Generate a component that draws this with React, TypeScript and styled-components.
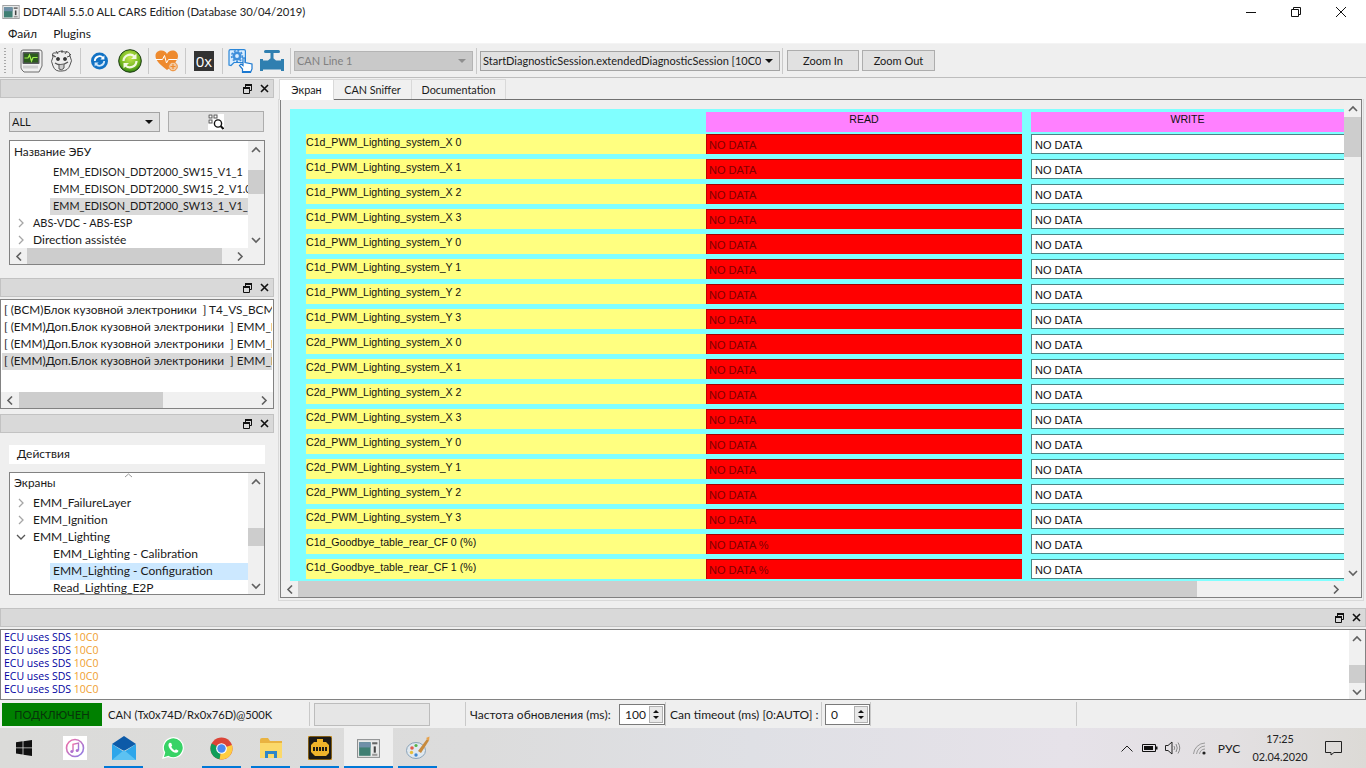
import React from "react";
import styled, { createGlobalStyle } from "styled-components";

const Global = createGlobalStyle`
  html, body { margin: 0; padding: 0; background: #efefef; }
  * { box-sizing: border-box; }
`;

const Page = styled.div`
  width: 1366px; height: 768px; overflow: hidden; display: flex; flex-direction: column;
  font-family: Lato, "Open Sans", sans-serif; font-size: 12px; color: #1a1a1a; background: #efefef;
`;
const TitleBar = styled.div`
  height: 24px; background: #fff; display: flex; align-items: center; padding-left: 2px; font-size: 11.3px; color: #222; flex: none;
`;
const TitleText = styled.span` margin-left: 3px; margin-bottom: 1px; `;
const WinButtons = styled.div` margin-left: auto; display: flex; align-items: center; height: 100%; padding-right: 20px; gap: 35px; `;
const MenuBar = styled.div`
  height: 20px; background: #fff; display: flex; align-items: center; padding-left: 8px; gap: 16px; flex: none; border-bottom: 1px solid #f4f4f4;
`;
const Toolbar = styled.div`
  height: 34px; flex: none; background: #efefef; border-bottom: 1px solid #bdbdbd; display: flex; align-items: center;
`;
const Grip = styled.div`
  width: 12px; height: 26px; display: flex; flex-direction: column; justify-content: space-between; align-items: flex-start; padding-left: 4px;
  &::before { content: ""; width: 2px; height: 100%; background: repeating-linear-gradient(#a8a8a8 0 1px, transparent 1px 3px); }
`;
const Sep = styled.div<{ $h?: number }>`
  width: 1px; height: ${p => p.$h ?? 26}px; background: #c9c9c9; flex: none;
`;
const Group = styled.div<{ $w: number; $pl: number; $gap?: number }>`
  width: ${p => p.$w}px; padding-left: ${p => p.$pl}px; display: flex; align-items: center; gap: ${p => p.$gap ?? 0}px; flex: none;
`;
const ZeroX = styled.div`
  width: 20px; height: 20px; background: #333; color: #fff; font-size: 15px; line-height: 20px; display: flex; align-items: flex-end; justify-content: center;
  font-family: "Open Sans", sans-serif; padding-top: 4px;
`;
const Combo = styled.div<{ $w: number; $off?: boolean }>`
  width: ${p => p.$w}px; height: 20px; display: flex; align-items: center; padding: 0 6px 0 2px; flex: none; overflow: hidden; white-space: nowrap; font-size: 11px;
  background: ${p => (p.$off ? "#c9c9c9" : "#e1e1e1")}; border: 1px solid ${p => (p.$off ? "#b4b4b4" : "#a3a3a3")};
  color: ${p => (p.$off ? "#808080" : "#1a1a1a")};
`;
const ComboText = styled.span` flex: 1; overflow: hidden; `;
const Arrow = styled.span<{ $off?: boolean }>`
  width: 0; height: 0; margin-left: 4px; flex: none;
  border-left: 4px solid transparent; border-right: 4px solid transparent; border-top: 4px solid ${p => (p.$off ? "#8f8f8f" : "#111")};
`;
const PushButton = styled.button<{ $w: number }>`
  width: ${p => p.$w}px; height: 21px; padding: 0; background: #e1e1e1; border: 1px solid #adadad; font: inherit; font-size: 11px; color: #1a1a1a; display: flex; align-items: center; justify-content: center; flex: none;
`;
const Main = styled.div` flex: none; height: 530px; display: flex; `;
const Left = styled.div` width: 274px; flex: none; padding-top: 1px; display: flex; flex-direction: column; `;
const DockHead = styled.div`
  height: 19px; flex: none; background: #d9d9d9; border: 1px solid #c2c2c2; display: flex; align-items: center; justify-content: flex-end; padding-right: 4px; gap: 8px;
`;
const DockBody = styled.div<{ $h: number }>` height: ${p => p.$h}px; flex: none; `;
const EcuBody = styled(DockBody)` padding: 13px 9px 0; display: flex; flex-direction: column; gap: 8px; `;
const ComboRow = styled.div` display: flex; gap: 8px; height: 21px; align-items: center; `;
const TreeFrame = styled.div<{ $h: number; $hb?: boolean }>`
  height: ${p => p.$h}px; width: 256px; flex: none; border: 1px solid #828282; background: #fff; display: grid;
  grid-template-columns: 1fr 16px; grid-template-rows: ${p => (p.$hb ? "1fr 16px" : "1fr")};
  overflow: hidden;
`;
const TreeView = styled.div` overflow: hidden; min-width: 0; min-height: 0; white-space: nowrap; `;
const TreeHeader = styled.div<{ $h: number }>` height: ${p => p.$h}px; padding: 0 0 3px 4px; display: flex; align-items: center; position: relative; font-size: 11.8px; `;
const SortMark = styled.svg` position: absolute; left: 114px; top: 0; `;
const TreeRow = styled.div<{ $lvl: number; $sel?: "gray" | "blue"; $caps?: boolean }>`
  height: 17px; line-height: 15px; padding-bottom: 2px; margin-left: ${p => (p.$lvl === 2 ? 40 : 0)}px; padding-left: ${p => (p.$lvl === 2 ? 3 : 6)}px; display: flex; align-items: center; overflow: hidden;
  font-size: ${p => (p.$caps ? "10.9px" : "12px")};
  background: ${p => (p.$sel === "gray" ? "#d9d9d9" : p.$sel === "blue" ? "#cce8ff" : "transparent")};
`;
const Twist = styled.span` width: 17px; flex: none; display: flex; align-items: center; justify-content: flex-start; `;
const Corner = styled.div` background: #f0f0f0; `;
const VTrack = styled.div` background: #f0f0f0; display: flex; flex-direction: column; min-height: 0; overflow: hidden; height: 100%; `;
const HTrack = styled.div` background: #f0f0f0; display: flex; align-items: stretch; min-width: 0; overflow: hidden; height: 16px; `;
const ArrowBox = styled.div<{ $s?: number; $end?: boolean }>`
  flex: none; display: flex; align-items: center; justify-content: center; width: ${p => p.$s ?? 17}px;
`;
const VArrowBox = styled.div<{ $s?: number }>`
  flex: none; display: flex; align-items: center; justify-content: center; height: ${p => p.$s ?? 17}px;
`;
const VThumb = styled.div<{ $top: number; $len: number }>`
  flex: none; margin-top: ${p => p.$top}px; height: ${p => p.$len}px; background: #cdcdcd;
`;
const HThumb = styled.div<{ $left: number; $len: number }>`
  flex: none; margin-left: ${p => p.$left}px; width: ${p => p.$len}px; background: #cdcdcd;
`;
const Spacer = styled.div` flex: 1; `;
const ListFrame = styled.div`
  height: 110px; flex: none; margin-top: 2px; border: 1px solid #828282; background: #fff; display: flex; flex-direction: column; overflow: hidden;
`;
const ListRows = styled.div` flex: 1; padding: 2px 1px 0; overflow: hidden; white-space: nowrap; font-size: 11.8px; `;
const ListRow = styled.div<{ $sel?: boolean }>`
  height: 17px; line-height: 15px; padding-left: 2px; overflow: hidden; background: ${p => (p.$sel ? "#d9d9d9" : "transparent")};
`;
const ActionBody = styled(DockBody)` padding: 12px 9px 0; display: flex; flex-direction: column; gap: 8px; `;
const ActionTab = styled.div` height: 19px; width: 256px; background: #fff; display: flex; align-items: center; padding: 0 0 2px 8px; flex: none; `;
const Right = styled.div` flex: 1; padding: 1px 2px 0 4px; min-width: 0; display: flex; flex-direction: column; `;
const TabBar = styled.div` height: 21px; display: flex; flex: none; padding-left: 1px; `;
const Tab = styled.div<{ $w: number; $on?: boolean }>`
  width: ${p => p.$w}px; height: ${p => (p.$on ? 21 : 20)}px; display: flex; align-items: center; justify-content: center; font-size: 10.8px; padding-bottom: 1px;
  background: ${p => (p.$on ? "#fff" : "#f0f0f0")}; border: 1px solid #d9d9d9; border-bottom: none; border-left-width: ${p => (p.$on ? 1 : 0)}px; z-index: ${p => (p.$on ? 1 : 0)}; position: relative;
`;
const TabPane = styled.div`
  height: 502px; flex: none; margin-top: -1px; border: 1px solid #d9d9d9; border-top: none; padding: 0 1px 2px 1px;
`;
const Frame = styled.div`
  height: 100%; border: 1px solid #808080; border-top-color: #707070; display: grid; grid-template-columns: 1fr 17px; grid-template-rows: 481px 16px; background: #efefef; overflow: hidden;
`;
const Viewport = styled.div` overflow: hidden; padding: 9px 0 0 9px; min-width: 0; `;
const Canvas = styled.div`
  background: #80ffff; height: 480px; width: 1054px; padding: 3px 0 0 16px; display: flex; flex-direction: column; gap: 5px; overflow: hidden;
  font-family: "Liberation Sans", Arial, sans-serif; font-size: 10.6px; color: #111;
`;
const DataGrid = styled.div<{ $head?: boolean }>`
  display: grid; grid-template-columns: 400px 316px 322px; column-gap: 0; flex: none; margin-bottom: ${p => (p.$head ? -3 : 0)}px;
`;
const HeadCell = styled.div<{ $ml?: number }>`
  height: 20px; background: #ff80ff; text-align: center; line-height: 13px; padding-top: 1px; margin-left: ${p => p.$ml ?? 0}px; font-weight: 400;
`;
const Blank = styled.div``;
const LabelCell = styled.div` height: 20px; background: #ffff80; padding-top: 2px; line-height: 13px; white-space: nowrap; `;
const ReadCell = styled.div`
  height: 20px; background: #ff0000; border-top: 1px solid #a80000; border-left: 1px solid #c00000; color: #800000; padding-left: 2px; line-height: 20px; white-space: nowrap; font-size: 11px;
`;
const WriteCell = styled.div`
  height: 20px; margin-left: 9px; background: #fff; border: 1px solid #4f8484; border-right: none; padding-left: 3px; line-height: 21px; white-space: nowrap; font-size: 11px;
`;
const BottomDock = styled.div` height: 92px; flex: none; display: flex; flex-direction: column; `;
const LogFrame = styled.div`
  height: 71px; flex: none; margin-top: 2px; margin-bottom: 1px; border: 1px solid #828282; background: #fff; display: grid; grid-template-columns: 1fr 16px; overflow: hidden;
`;
const LogBody = styled.div`
  padding: 1px 3px; font-size: 10.5px; line-height: 13px; color: #0000a0; overflow: hidden; font-family: "Open Sans", sans-serif;
`;
const Orange = styled.span` color: #f0a030; `;
const StatusBar = styled.div` height: 28px; flex: none; display: flex; align-items: center; padding-left: 2px; `;
const Connected = styled.div`
  width: 100px; height: 23px; background: #008000; color: #07330a; display: flex; align-items: center; justify-content: center; flex: none; font-size: 11.2px;
`;
const StatusText = styled.div<{ $w: number; $pl: number; $small?: boolean }>`
  width: ${p => p.$w}px; padding-left: ${p => p.$pl}px; flex: none; white-space: nowrap; font-size: ${p => (p.$small ? "11.2px" : "12px")};
`;
const Progress = styled.div` width: 116px; height: 23px; margin: 0 4px; background: #e6e6e6; border: 1px solid #bcbcbc; flex: none; `;
const Spin = styled.div<{ $w: number }>`
  width: ${p => p.$w}px; height: 21px; background: #fff; border: 1px solid #7a7a7a; display: flex; align-items: center; padding-left: 5px; flex: none;
`;
const SpinValue = styled.span` flex: 1; `;
const SpinBtns = styled.div`
  width: 14px; height: 17px; margin-right: 1px; border: 1px solid #b0b0b0; background: #e8e8e8; display: flex; flex-direction: column; align-items: center; justify-content: space-evenly;
`;
const TriUp = styled.span` width: 0; height: 0; border-left: 3px solid transparent; border-right: 3px solid transparent; border-bottom: 3px solid #111; `;
const TriDown = styled.span` width: 0; height: 0; border-left: 3px solid transparent; border-right: 3px solid transparent; border-top: 3px solid #111; `;
const Taskbar = styled.div`
  height: 40px; flex: none; display: flex; background: linear-gradient(90deg, #dbdbd9 0%, #dcdcdc 35%, #dfe0e5 55%, #e6e2e9 78%, #e3e0e2 90%, #dcdad6 100%);
`;
const StartBtn = styled.div` width: 50px; flex: none; display: flex; align-items: center; padding-left: 16px; `;
const TaskItem = styled.div<{ $on?: boolean; $run?: boolean }>`
  width: 49px; flex: none; display: flex; align-items: center; justify-content: center; position: relative;
  background: ${p => (p.$on ? "#efefef" : "transparent")};
  &::after { content: ""; display: ${p => (p.$run ? "block" : "none")}; position: absolute; bottom: 0; height: 2px; background: #0078d7; left: ${p => (p.$on ? 0 : 5)}px; right: ${p => (p.$on ? 0 : 5)}px; }
`;
const Tray = styled.div` margin-left: auto; display: flex; align-items: stretch; padding-right: 16px; color: #222; `;
const TrayItem = styled.div<{ $w: number }>` width: ${p => p.$w}px; flex: none; display: flex; align-items: center; justify-content: center; `;
const Clock = styled.div` width: 74px; flex: none; display: flex; flex-direction: column; align-items: center; justify-content: center; line-height: 18px; font-size: 10.8px; `;

const Ch = ({ d, c = "#606060" }: { d: "u" | "d" | "l" | "r"; c?: string }) => {
  const p = { u: "M1 6 L5 2 L9 6", d: "M1 2 L5 6 L9 2", l: "M6 0.5 L2 4.5 L6 8.5", r: "M2 0.5 L6 4.5 L2 8.5" }[d];
  const s = d === "u" || d === "d";
  return (
    <svg width={s ? 10 : 8} height={s ? 8 : 9}><path d={p} fill="none" stroke={c} strokeWidth="1.6" /></svg>
  );
};
const Expand = ({ open }: { open?: boolean }) => (
  <svg width="10" height="10">
    {open ? <path d="M1 3 L5 7 L9 3" fill="none" stroke="#555" strokeWidth="1.3" /> : <path d="M3 1 L7 5 L3 9" fill="none" stroke="#a6a6a6" strokeWidth="1.3" />}
  </svg>
);
const FloatIcon = () => (
  <svg width="9" height="10"><path d="M0.5 3.5 H6.5 V9.5 H0.5 Z M2.5 3.5 V0.5 H8.5 V6.5 H6.5" fill="none" stroke="#111" strokeWidth="1" /><rect x="0" y="3" width="7" height="2" fill="#111" /><rect x="2" y="0" width="7" height="2" fill="#111" /></svg>
);
const CloseIcon = () => (
  <svg width="9" height="9"><path d="M1 1 L8 8 M8 1 L1 8" stroke="#111" strokeWidth="1.6" /></svg>
);
const HeadBtns = () => (<><FloatIcon /><CloseIcon /></>);

const VBar = ({ top, len, a = 17 }: { top: number; len: number; a?: number }) => (
  <VTrack>
    <VArrowBox $s={a}><Ch d="u" /></VArrowBox>
    <VThumb $top={top} $len={len} />
    <Spacer />
    <VArrowBox $s={a}><Ch d="d" /></VArrowBox>
  </VTrack>
);
const HBar = ({ left, len, a = 17 }: { left: number; len: number; a?: number }) => (
  <HTrack>
    <ArrowBox $s={a}><Ch d="l" /></ArrowBox>
    <HThumb $left={left} $len={len} />
    <Spacer />
    <ArrowBox $s={a}><Ch d="r" /></ArrowBox>
  </HTrack>
);

const AppGlyph = ({ s = 18, h = 14 }: { s?: number; h?: number }) => (
  <svg width={s} height={h} viewBox="0 0 22 18">
    <rect x="0.5" y="0.5" width="21" height="17" fill="#e9eaea" stroke="#8d8f90" />
    <rect x="2" y="3" width="11" height="13" fill="#3f7f73" />
    <rect x="2" y="3" width="11" height="5" fill="#6f8fa8" />
    <rect x="14.5" y="3" width="5" height="2" fill="#666" />
    <rect x="16" y="7" width="2" height="6" fill="#444" />
    <rect x="14.5" y="14" width="5" height="2" fill="#999" />
  </svg>
);
const MonitorIcon = () => (
  <svg width="24" height="24" viewBox="0 0 24 24">
    <path d="M3 21 L2 19 V3 Q2 1 4 1 H21 Q23 1 23 3 V17 L20 23 H5 Z" fill="#f0f0f0" stroke="#6f6f6f" />
    <rect x="3.5" y="3" width="17" height="12" rx="1" fill="#55585a" />
    <rect x="5" y="4.5" width="14" height="9" fill="#2c5a1e" />
    <path d="M5.5 9 H9 L10.5 6 L12.5 12 L14 8.5 H18.5" fill="none" stroke="#9ef04a" strokeWidth="1.2" />
    <rect x="4" y="16.5" width="15" height="3" fill="#cfcfcf" />
  </svg>
);
const FaceIcon = () => (
  <svg width="23" height="24" viewBox="0 0 23 24" fill="none" stroke="#555" strokeWidth="1">
    <path d="M3 8 Q1 3 6 4 Q10 1 15 3 Q20 2 20 7 Q23 12 20 16 Q18 22 12 22 Q5 23 3 17 Q0 12 3 8 Z" fill="#eee" />
    <path d="M6 2 L8 5 M12 1 L12 4 M17 2 L15 5 M2 6 L5 8 M21 5 L18 8" />
    <circle cx="8" cy="10" r="1.6" fill="#333" /><circle cx="15" cy="10" r="1.6" fill="#333" />
    <path d="M5 14 Q11 18 18 13" strokeWidth="1.4" />
    <path d="M9 16 V20 Q12 22 14 19 V15.5" fill="#ccc" />
    <path d="M6 8 L3 6 M17 8 L20 7" />
  </svg>
);
const SyncIcon = () => (
  <svg width="19" height="20" viewBox="0 0 19 20">
    <circle cx="9.5" cy="10" r="8.5" fill="#1272c4" />
    <path d="M4.8 10 A4.7 4.7 0 0 1 13 6.8" fill="none" stroke="#fff" strokeWidth="1.8" />
    <path d="M14.4 4.6 V8.6 H10.4 Z" fill="#fff" />
    <path d="M14.2 10 A4.7 4.7 0 0 1 6 13.2" fill="none" stroke="#cfe6fa" strokeWidth="1.8" />
    <path d="M4.6 15.4 V11.4 H8.6 Z" fill="#cfe6fa" />
  </svg>
);
const GreenIcon = () => (
  <svg width="24" height="24" viewBox="0 0 24 24">
    <defs><radialGradient id="gr" cx="50%" cy="35%" r="65%"><stop offset="0" stopColor="#c6e84e" /><stop offset="0.7" stopColor="#6fb41e" /><stop offset="1" stopColor="#2f7d14" /></radialGradient></defs>
    <circle cx="12" cy="12" r="11.3" fill="url(#gr)" stroke="#1d3d14" />
    <path d="M5.5 12 A6.5 6.5 0 0 1 16.5 7.5" fill="none" stroke="#f2f8e0" strokeWidth="2.2" />
    <path d="M18.5 4.5 V10 H13 Z" fill="#f2f8e0" />
    <path d="M18.5 12 A6.5 6.5 0 0 1 7.5 16.5" fill="none" stroke="#f2f8e0" strokeWidth="2.2" />
    <path d="M5.5 19.5 V14 H11 Z" fill="#f2f8e0" />
  </svg>
);
const HeartIcon = () => (
  <svg width="24" height="22" viewBox="0 0 24 22">
    <path d="M12 20 C4 14 0.5 10 0.5 6 C0.5 2 3.5 0.5 6.5 0.5 C9 0.5 11 2 12 4 C13 2 15 0.5 17.5 0.5 C20.5 0.5 23 2.5 23 6 C23 10 19 15 12 20 Z" fill="#ee8a2e" />
    <path d="M0.5 9.5 H7.5 L9.5 5.5 L11.5 13 L13.5 9.5 H22" fill="none" stroke="#fff" strokeWidth="1" />
    <circle cx="18" cy="16.5" r="4.3" fill="#f3c9a0" stroke="#ee8a2e" />
    <path d="M18 14 V19 M15.5 16.5 H20.5" stroke="#ee8a2e" strokeWidth="1.2" />
  </svg>
);
const GearHandIcon = () => (
  <svg width="25" height="24" viewBox="0 0 25 24">
    <path d="M1 16 V2 Q1 0.6 2.4 0.6 H16 Q17.4 0.6 17.4 2 V12 Q17.4 13.5 16 13.5 H6 L3 16.5 Z" fill="#dbeeff" stroke="#2a86d8" strokeWidth="1.2" />
    <circle cx="9" cy="7" r="4.6" fill="#3f8fdb" />
    <circle cx="9" cy="7" r="5.4" fill="none" stroke="#3f8fdb" strokeWidth="1.6" strokeDasharray="2 1.6" />
    <circle cx="9" cy="7" r="1.9" fill="#dbeeff" />
    <path d="M14.5 23.5 V20 L11.5 16.5 L13 15 L15 16.5 V9.5 Q16 8 17 9.5 V13.5 L24 15 V20 L22.5 23.5 Z" fill="#fff" stroke="#1b78d0" strokeWidth="1.2" />
    <path d="M14.5 22 H22.8 V24 H14.5 Z" fill="#1b78d0" />
  </svg>
);
const ValveIcon = () => (
  <svg width="24" height="22" viewBox="0 0 24 22" fill="#2f7fb0">
    <rect x="4" y="0" width="16" height="3" rx="1.5" />
    <rect x="10.5" y="2" width="3" height="7" />
    <path d="M0 9 H3 V10.5 H8 Q10 8 12 8 Q14 8 16 10.5 H21 V9 H24 V21 H21 V19.5 H3 V21 H0 Z" />
  </svg>
);
const QrIcon = () => (
  <svg width="16" height="16" viewBox="0 0 16 16">
    <rect width="16" height="16" fill="#fff" />
    <g fill="#555">
      <path d="M0.5 0.5 H4.5 V4.5 H0.5 Z M1.5 1.5 V3.5 H3.5 V1.5 Z" fillRule="evenodd" />
      <path d="M5.5 0.5 H9.5 V4.5 H5.5 Z M6.5 1.5 V3.5 H8.5 V1.5 Z" fillRule="evenodd" />
      <path d="M0.5 5.5 H4.5 V9.5 H0.5 Z M1.5 6.5 V8.5 H3.5 V6.5 Z" fillRule="evenodd" />
    </g>
    <circle cx="10" cy="9.5" r="3.6" fill="#fff" stroke="#111" strokeWidth="1.4" />
    <path d="M12.6 12 L15.5 15" stroke="#111" strokeWidth="2" />
  </svg>
);

const WinLogo = () => (
  <svg width="16" height="16" viewBox="0 0 16 16" fill="#111">
    <path d="M0 2.2 L6.6 1.3 V7.4 H0 Z M7.4 1.2 L16 0 V7.4 H7.4 Z M0 8.2 H6.6 V14.4 L0 13.6 Z M7.4 8.2 H16 V16 L7.4 14.8 Z" />
  </svg>
);
const ITunes = () => (
  <svg width="24" height="24" viewBox="0 0 24 24">
    <defs><linearGradient id="it" x1="0" y1="0" x2="1" y2="1"><stop offset="0" stopColor="#f26fa4" /><stop offset="1" stopColor="#8a7de8" /></linearGradient></defs>
    <rect width="24" height="24" fill="#fff" />
    <circle cx="12" cy="12" r="8.5" fill="#fff" stroke="url(#it)" strokeWidth="1.6" />
    <path d="M10 15.5 V8.2 L15.5 7 V14.5" fill="none" stroke="url(#it)" strokeWidth="1.4" />
    <circle cx="8.8" cy="15.6" r="1.5" fill="#b070d0" /><circle cx="14.2" cy="14.6" r="1.5" fill="#b070d0" />
  </svg>
);
const Mail = () => (
  <svg width="24" height="24" viewBox="0 0 24 24">
    <path d="M0 8 L12 0 L24 8 L12 15 Z" fill="#0c5aa8" />
    <path d="M0 8 L12 16 L24 8 V24 H0 Z" fill="#2ea6ea" />
    <path d="M0 24 L12 14 L24 24 Z" fill="#5cc2f2" />
  </svg>
);
const WhatsApp = () => (
  <svg width="22" height="22" viewBox="0 0 22 22">
    <path d="M1 21 L2.6 15.6 A10 10 0 1 1 6.4 19.4 Z" fill="#37d366" stroke="#fff" strokeWidth="1.2" />
    <path d="M7.6 5.8 C6 7 6 9.4 8 12 C10 14.8 13 16.4 15 15.6 C16.2 15 16.6 14 16.3 13.4 L13.9 12.2 L12.9 13.4 C11.4 12.8 9.9 11.3 9.2 9.8 L10.2 8.7 L9.2 6 Z" fill="#fff" />
  </svg>
);
const Chrome = () => (
  <svg width="23" height="23" viewBox="0 0 24 24">
    <circle cx="12" cy="12" r="11.5" fill="#db4437" />
    <path d="M12 12 L1.7 6.8 A11.5 11.5 0 0 0 10 23.3 Z" fill="#0f9d58" />
    <path d="M12 12 L22.9 8.3 A11.5 11.5 0 0 1 10 23.3 Z" fill="#ffcd40" />
    <circle cx="12" cy="12" r="5.6" fill="#fff" /><circle cx="12" cy="12" r="4.4" fill="#4a8af0" />
  </svg>
);
const Folder = () => (
  <svg width="22" height="20" viewBox="0 0 22 20">
    <path d="M0 2 Q0 0 2 0 H8 L10 3 H22 V6 H0 Z" fill="#e9b341" />
    <rect y="5" width="22" height="15" fill="#fbd96a" />
    <path d="M5 20 V13 H17 V20 H14 V16 H8 V20 Z" fill="#2f86c9" />
  </svg>
);
const YellowApp = () => (
  <svg width="24" height="24" viewBox="0 0 24 24">
    <rect width="24" height="24" rx="2" fill="#1c1a16" stroke="#e8a41c" />
    <path d="M9 3 H15 V6 H18 L21 9 V17 L18 20 H7 L3 16 V9 L6 6 H9 Z" fill="#eeb32a" />
    <path d="M5 13 H19" stroke="#1c1a16" strokeWidth="4" strokeDasharray="2 1" />
  </svg>
);
const Paint = () => (
  <svg width="24" height="24" viewBox="0 0 24 24">
    <ellipse cx="10" cy="14.5" rx="9.5" ry="8" fill="#dfe8ef" stroke="#8aa3b8" />
    <circle cx="6" cy="12" r="1.8" fill="#e35b4a" /><circle cx="10" cy="9.5" r="1.6" fill="#57b24a" />
    <circle cx="5.5" cy="16.5" r="1.7" fill="#e6bd3a" /><circle cx="10" cy="19" r="1.7" fill="#3f87d0" />
    <path d="M12 15 L21 3 L23 4.5 L15 17 Z" fill="#c78a3c" />
    <path d="M20 2 L23.5 0.5 L23 5 Z" fill="#e8a24a" />
  </svg>
);

const rows = [
  ...["C1d", "C2d"].flatMap(p => ["X", "Y"].flatMap(a => [0, 1, 2, 3].map(n => `${p}_PWM_Lighting_system_${a} ${n}`))),
  "C1d_Goodbye_table_rear_CF 0 (%)",
  "C1d_Goodbye_table_rear_CF 1 (%)",
];

export default function App() {
  return (
    <Page>
      <Global />
      <TitleBar>
        <AppGlyph />
        <TitleText>DDT4All 5.5.0 ALL CARS Edition (Database 30/04/2019)</TitleText>
        <WinButtons>
          <svg width="10" height="10"><path d="M0 5.5 H10" stroke="#111" /></svg>
          <svg width="10" height="10"><path d="M0.5 2.5 H7.5 V9.5 H0.5 Z M2.5 2.5 V0.5 H9.5 V7.5 H7.5" fill="none" stroke="#111" /></svg>
          <svg width="10" height="10"><path d="M0 0 L10 10 M10 0 L0 10" stroke="#111" /></svg>
        </WinButtons>
      </TitleBar>
      <MenuBar><span>Файл</span><span>Plugins</span></MenuBar>
      <Toolbar>
        <Grip /><Sep />
        <Group $w={67} $pl={6} $gap={7}><MonitorIcon /><FaceIcon /></Group><Sep />
        <Group $w={67} $pl={9} $gap={9}><SyncIcon /><GreenIcon /></Group><Sep />
        <Group $w={36} $pl={6}><HeartIcon /></Group><Sep />
        <Group $w={36} $pl={8}><ZeroX>0x</ZeroX></Group><Sep />
        <Group $w={67} $pl={5} $gap={7}><GearHandIcon /><ValveIcon /></Group><Sep />
        <Group $w={185} $pl={3}><Combo $w={179} $off><ComboText>CAN Line 1</ComboText><Arrow $off /></Combo></Group><Sep />
        <Group $w={305} $pl={3}><Combo $w={300}><ComboText>StartDiagnosticSession.extendedDiagnosticSession [10C0]</ComboText><Arrow /></Combo></Group><Sep />
        <Group $w={160} $pl={4} $gap={3}><PushButton $w={72}>Zoom In</PushButton><PushButton $w={73}>Zoom Out</PushButton></Group>
      </Toolbar>
      <Main>
        <Left>
          <DockHead><HeadBtns /></DockHead>
          <EcuBody $h={180}>
            <ComboRow>
              <Combo $w={151}><ComboText>ALL</ComboText><Arrow /></Combo>
              <PushButton $w={96}><QrIcon /></PushButton>
            </ComboRow>
            <TreeFrame $h={125} $hb>
              <TreeView>
                <TreeHeader $h={23}>Название ЭБУ</TreeHeader>
                <TreeRow $lvl={2} $caps>EMM_EDISON_DDT2000_SW15_V1_1</TreeRow>
                <TreeRow $lvl={2} $caps>EMM_EDISON_DDT2000_SW15_2_V1.0</TreeRow>
                <TreeRow $lvl={2} $caps $sel="gray">EMM_EDISON_DDT2000_SW13_1_V1_</TreeRow>
                <TreeRow $lvl={1} $caps><Twist><Expand /></Twist>ABS-VDC - ABS-ESP</TreeRow>
                <TreeRow $lvl={1}><Twist><Expand /></Twist>Direction assistée</TreeRow>
              </TreeView>
              <VBar top={12} len={24} />
              <HBar left={0} len={195} />
              <Corner />
            </TreeFrame>
          </EcuBody>
          <DockHead><HeadBtns /></DockHead>
          <ListFrame>
            <ListRows>
              <ListRow>[ (BCM)Блок кузовной электроники&nbsp; ] T4_VS_BCM_ECU</ListRow>
              <ListRow>[ (EMM)Доп.Блок кузовной электроники&nbsp; ] EMM_EDISON</ListRow>
              <ListRow>[ (EMM)Доп.Блок кузовной электроники&nbsp; ] EMM_EDISON</ListRow>
              <ListRow $sel>[ (EMM)Доп.Блок кузовной электроники&nbsp; ] EMM_EDISON</ListRow>
            </ListRows>
            <HBar left={0} len={144} a={18} />
          </ListFrame>
          <DockBody $h={5} />
          <DockHead><HeadBtns /></DockHead>
          <ActionBody $h={175}>
            <ActionTab>Действия</ActionTab>
            <TreeFrame $h={123}>
              <TreeView>
                <TreeHeader $h={22}>
                  Экраны
                  <SortMark width="9" height="5"><path d="M1 4 L4.5 1 L8 4" fill="none" stroke="#999" /></SortMark>
                </TreeHeader>
                <TreeRow $lvl={1}><Twist><Expand /></Twist>EMM_FailureLayer</TreeRow>
                <TreeRow $lvl={1}><Twist><Expand /></Twist>EMM_Ignition</TreeRow>
                <TreeRow $lvl={1}><Twist><Expand open /></Twist>EMM_Lighting</TreeRow>
                <TreeRow $lvl={2}>EMM_Lighting - Calibration</TreeRow>
                <TreeRow $lvl={2} $sel="blue">EMM_Lighting - Configuration</TreeRow>
                <TreeRow $lvl={2}>Read_Lighting_E2P</TreeRow>
              </TreeView>
              <VBar top={38} len={18} />
            </TreeFrame>
          </ActionBody>
        </Left>
        <Right>
          <TabBar>
            <Tab $w={55} $on>Экран</Tab>
            <Tab $w={78}>CAN Sniffer</Tab>
            <Tab $w={94}>Documentation</Tab>
          </TabBar>
          <TabPane>
            <Frame>
              <Viewport>
                <Canvas>
                  <DataGrid $head>
                    <Blank />
                    <HeadCell>READ</HeadCell>
                    <HeadCell $ml={9}>WRITE</HeadCell>
                  </DataGrid>
                  {rows.map(r => (
                    <DataGrid key={r}>
                      <LabelCell>{r}</LabelCell>
                      <ReadCell>{r.includes("%") ? "NO DATA %" : "NO DATA"}</ReadCell>
                      <WriteCell>NO DATA</WriteCell>
                    </DataGrid>
                  ))}
                </Canvas>
              </Viewport>
              <VBar top={0} len={40} />
              <HBar left={0} len={899} />
              <Corner />
            </Frame>
          </TabPane>
        </Right>
      </Main>
      <BottomDock>
        <DockHead><HeadBtns /></DockHead>
        <LogFrame>
          <LogBody>
            {[0, 1, 2, 3, 4].map(i => (
              <div key={i}>ECU uses SDS <Orange>10C0</Orange></div>
            ))}
          </LogBody>
          <VBar top={17} len={18} a={18} />
        </LogFrame>
      </BottomDock>
      <StatusBar>
        <Connected>ПОДКЛЮЧЕН</Connected>
        <StatusText $w={207} $pl={6} $small>CAN (Tx0x74D/Rx0x76D)@500K</StatusText>
        <Sep $h={24} />
        <Progress />
        <StatusText $w={31} $pl={0} />
        <Sep $h={24} />
        <StatusText $w={153} $pl={4}>Частота обновления (ms):</StatusText>
        <Spin $w={46}><SpinValue>100</SpinValue><SpinBtns><TriUp /><TriDown /></SpinBtns></Spin>
        <Sep $h={24} />
        <StatusText $w={155} $pl={4}>Can timeout (ms) [0:AUTO] :</StatusText>
        <Sep $h={24} />
        <StatusText $w={3} $pl={0} />
        <Spin $w={45}><SpinValue>0</SpinValue><SpinBtns><TriUp /><TriDown /></SpinBtns></Spin>
        <Sep $h={24} />
        <StatusText $w={205} $pl={0} />
        <Sep $h={24} />
      </StatusBar>
      <Taskbar>
        <StartBtn><WinLogo /></StartBtn>
        <TaskItem><ITunes /></TaskItem>
        <TaskItem $run><Mail /></TaskItem>
        <TaskItem><WhatsApp /></TaskItem>
        <TaskItem $run><Chrome /></TaskItem>
        <TaskItem $run><Folder /></TaskItem>
        <TaskItem $run><YellowApp /></TaskItem>
        <TaskItem $run $on><AppGlyph s={23} h={19} /></TaskItem>
        <TaskItem $run><Paint /></TaskItem>
        <Tray>
          <TrayItem $w={24}><svg width="12" height="7"><path d="M0.5 6.5 L6 1 L11.5 6.5" fill="none" stroke="#222" /></svg></TrayItem>
          <TrayItem $w={22}><svg width="16" height="10"><path d="M0.5 1.5 H13.5 V8.5 H0.5 Z" fill="none" stroke="#111" /><rect x="2" y="3" width="9" height="4" fill="#111" /><rect x="14" y="3.5" width="1.5" height="3" fill="#111" /></svg></TrayItem>
          <TrayItem $w={23}><svg width="16" height="14"><path d="M0.5 4.5 H3 L7 1 V13 L3 9.5 H0.5 Z" fill="none" stroke="#222" /><path d="M9 5 Q10.5 7 9 9 M11 3 Q13.5 7 11 11 M13 1.5 Q16.5 7 13 12.5" fill="none" stroke="#888" /></svg></TrayItem>
          <TrayItem $w={31}><svg width="14" height="13"><path d="M0.5 12 A12 12 0 0 1 12 1 M3.5 12 A9 9 0 0 1 12 4 M6.5 12 A6 6 0 0 1 12 7" fill="none" stroke="#9a9a9a" /><circle cx="11" cy="11" r="1.6" fill="#222" /></svg></TrayItem>
          <TrayItem $w={28}>РУС</TrayItem>
          <Clock><span>17:25</span><span>02.04.2020</span></Clock>
          <TrayItem $w={33}><svg width="17" height="15"><path d="M0.5 0.5 H16.5 V11.5 H9 L6 14 V11.5 H0.5 Z" fill="none" stroke="#222" /></svg></TrayItem>
        </Tray>
      </Taskbar>
    </Page>
  );
}
